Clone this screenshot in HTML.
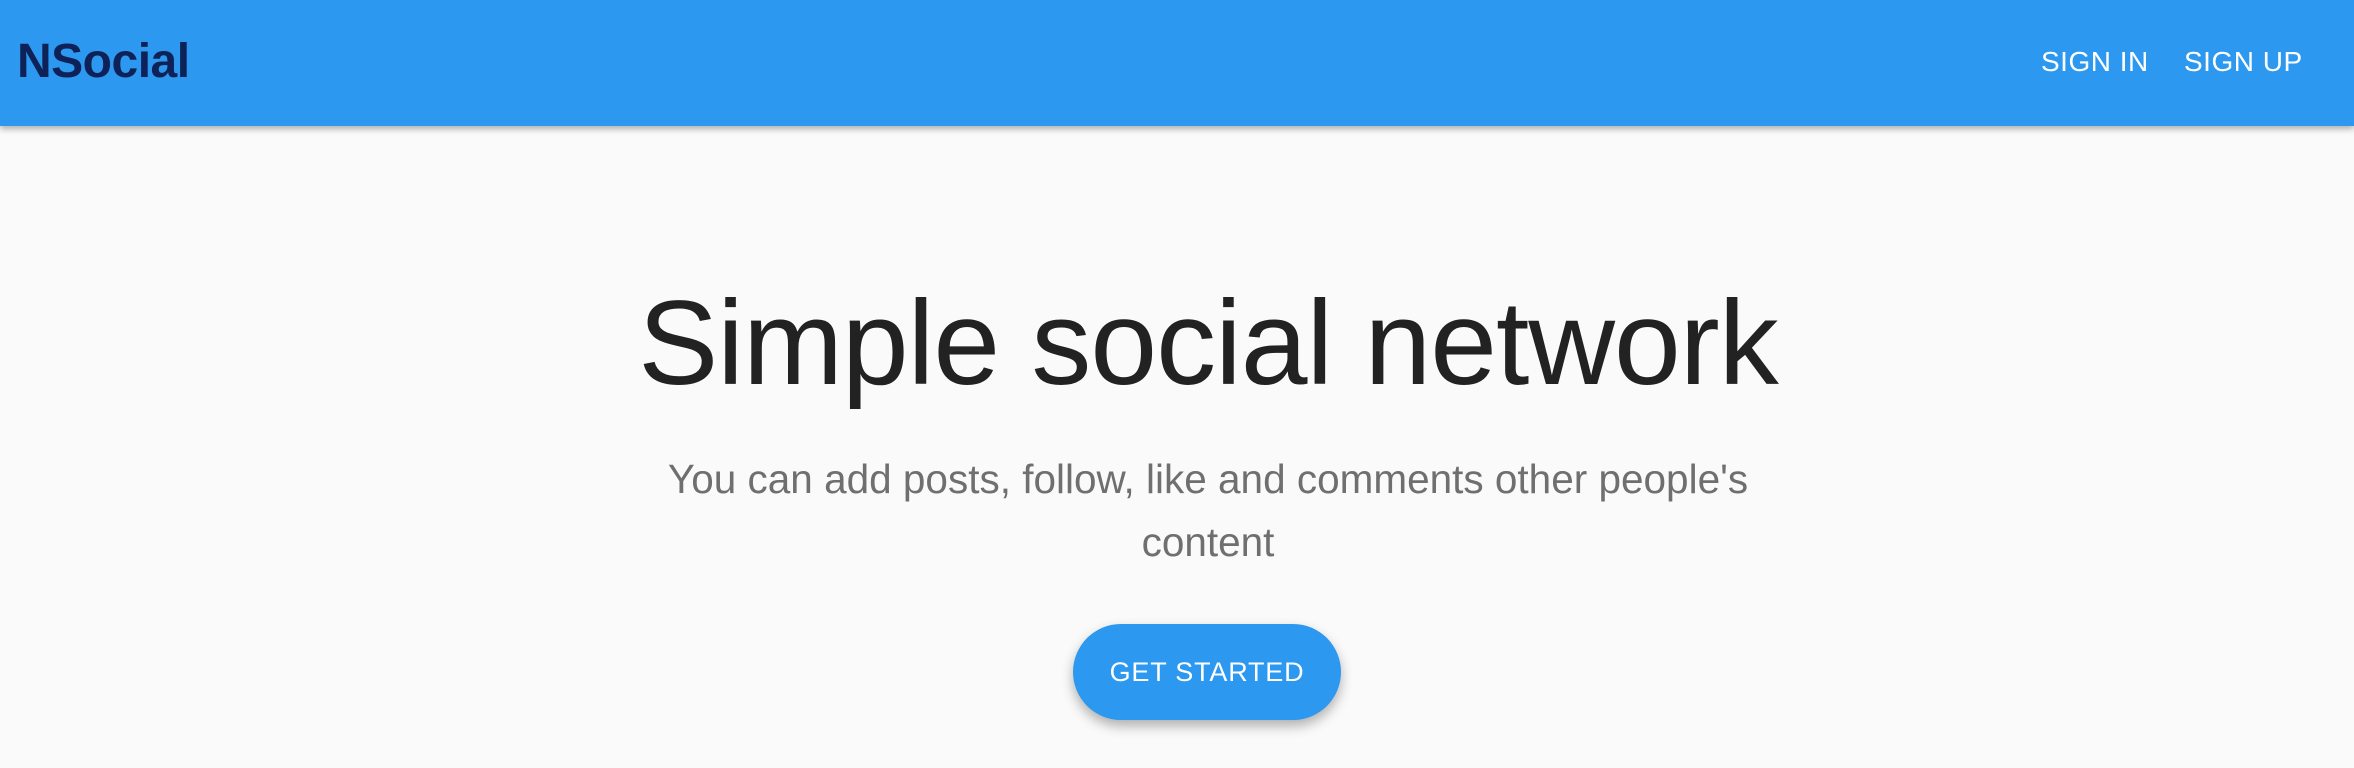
<!DOCTYPE html>
<html><head><meta charset="utf-8"><style>
html,body{margin:0;padding:0;width:2354px;height:768px;background:#fafafa;overflow:hidden;font-family:"Liberation Sans",Arial,sans-serif}
.hdr{position:absolute;left:0;top:0;width:2354px;height:126px;background:#2c98f0;box-shadow:0 3px 6px rgba(0,0,0,.3)}
.logo{position:absolute;left:17px;top:33px;font-size:48px;font-weight:bold;color:#0e2257;line-height:58px;letter-spacing:-0.5px}
.nav{position:absolute;top:46px;font-size:28px;color:#fff;line-height:32px;letter-spacing:0.5px}
h1{position:absolute;left:31px;width:2354px;top:273px;margin:0;text-align:center;font-weight:300;font-size:120px;line-height:140px;color:#222;letter-spacing:-1px}
.sub{position:absolute;left:653px;width:1110px;top:448px;text-align:center;font-size:40.5px;line-height:63px;color:#6f6f6f}
.btn{position:absolute;left:1073px;top:624px;width:268px;height:96px;border-radius:48px;background:#2c98f0;color:#fff;font-size:27px;line-height:96px;text-align:center;letter-spacing:0.8px;box-shadow:0 6px 12px rgba(0,0,0,.3)}
</style></head><body>
<div class="hdr">
<div class="logo">NSocial</div>
<div class="nav" style="left:2041px">SIGN IN</div>
<div class="nav" style="left:2184px">SIGN UP</div>
</div>
<h1>Simple social network</h1>
<div class="sub">You can add posts, follow, like and comments other people's content</div>
<div class="btn">GET STARTED</div>
</body></html>
